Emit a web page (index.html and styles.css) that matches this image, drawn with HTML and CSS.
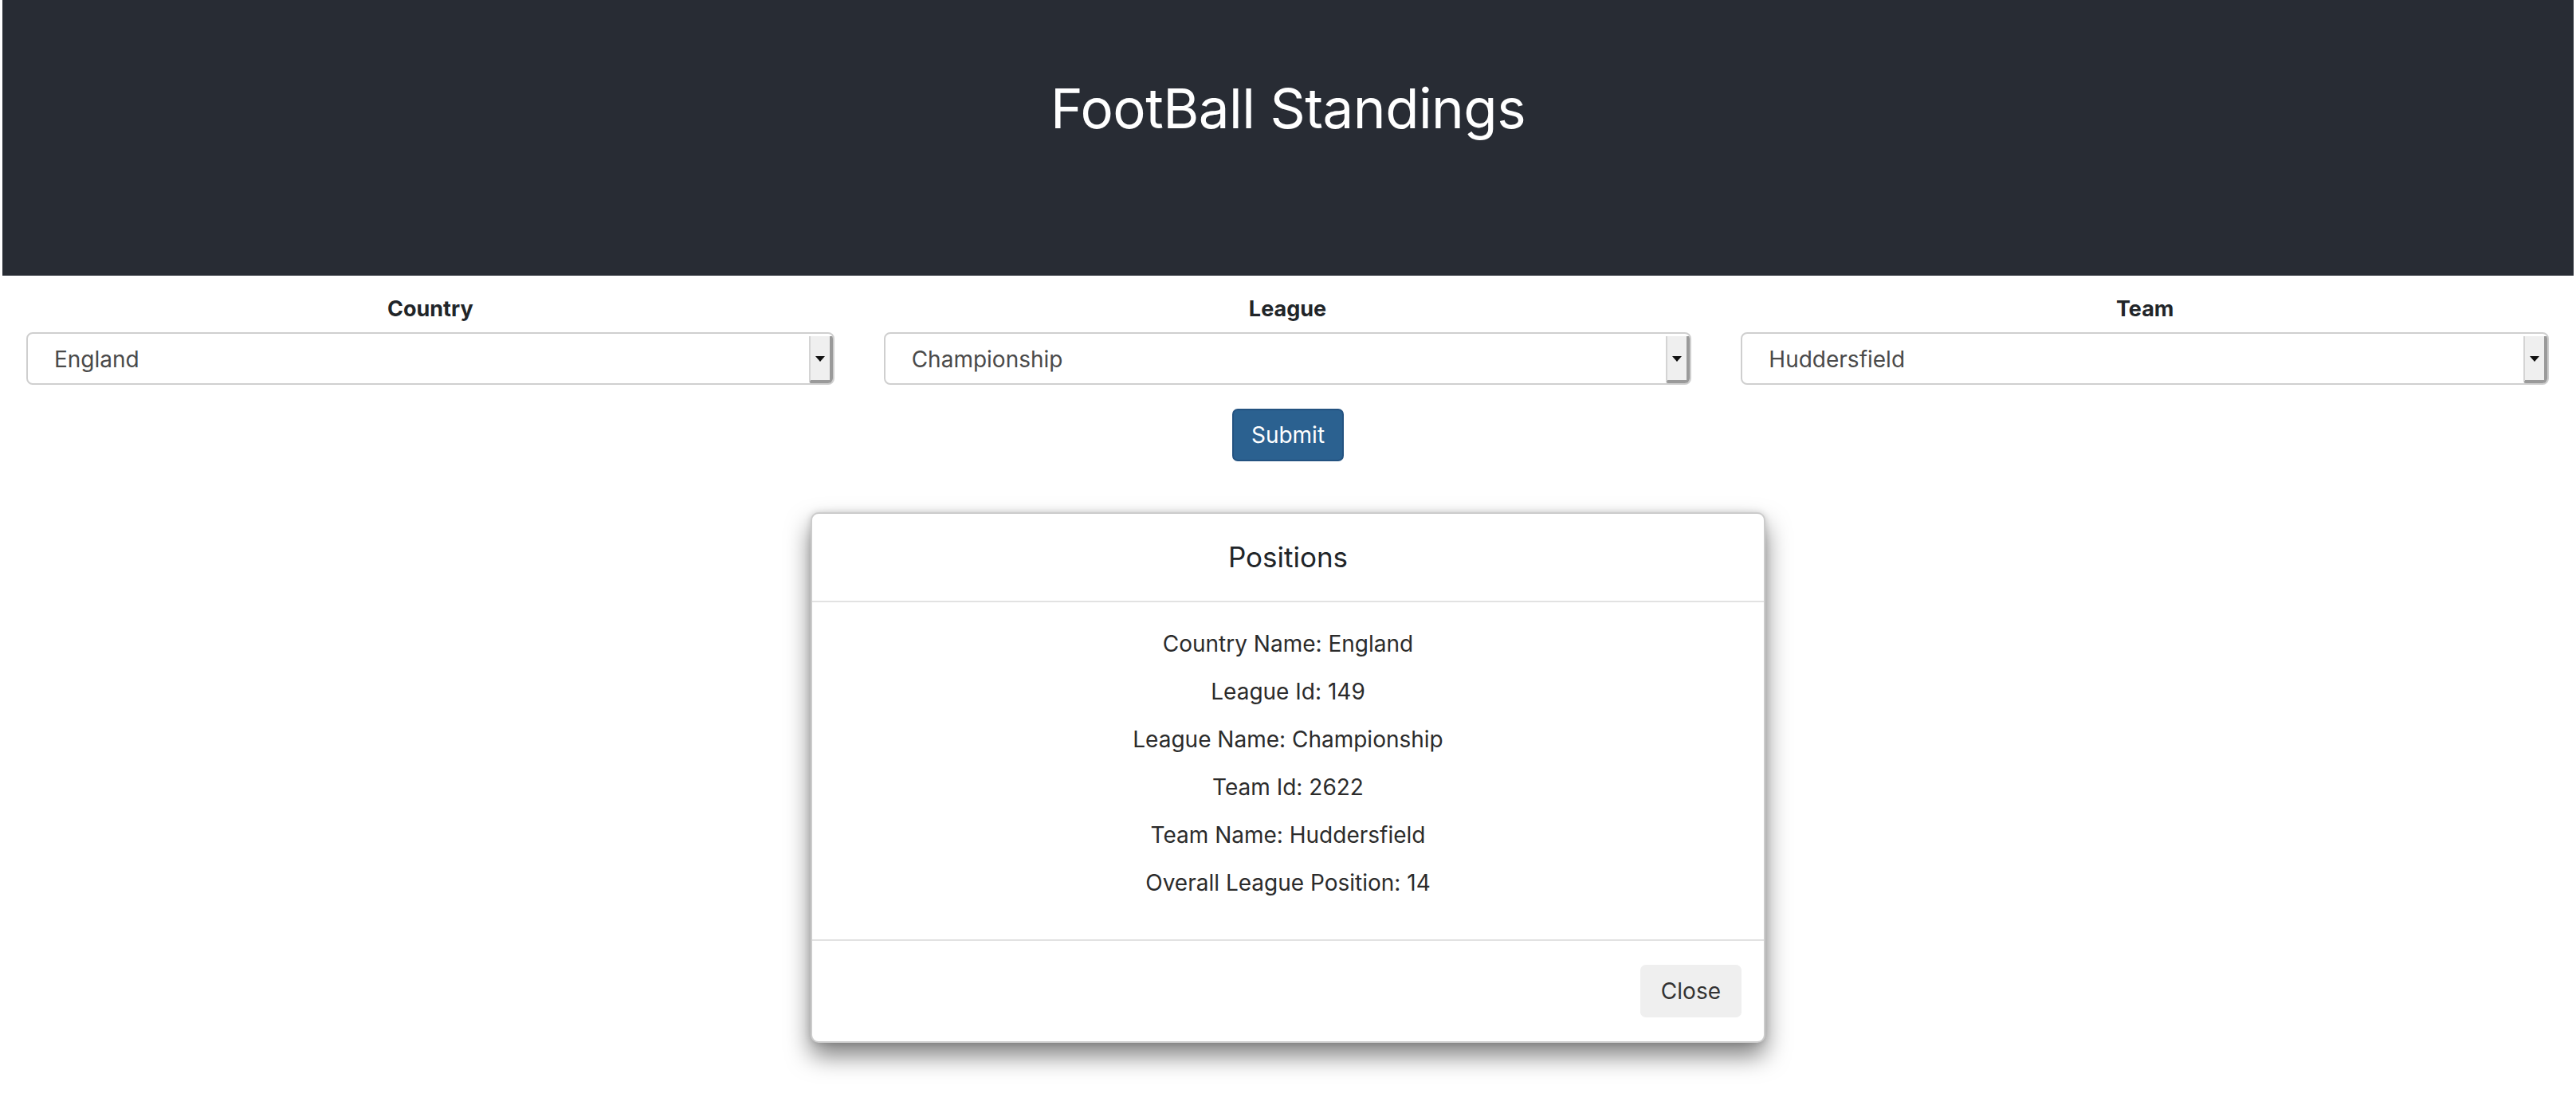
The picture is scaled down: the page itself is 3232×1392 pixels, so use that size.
FILE: index.html
```html
<!DOCTYPE html>
<html lang="en">
<head>
<meta charset="utf-8">
<title>FootBall Standings</title>
<link rel="stylesheet" href="styles.css">
</head>
<body>
<header class="app-header">
  <h1 class="app-title">FootBall Standings</h1>
</header>

<section class="filters">
  <div class="field">
    <label class="field-label">Country</label>
    <div class="select">
      <span class="select-value">England</span>
      <span class="select-button"><span class="select-arrow"></span></span>
    </div>
  </div>
  <div class="field">
    <label class="field-label">League</label>
    <div class="select">
      <span class="select-value">Championship</span>
      <span class="select-button"><span class="select-arrow"></span></span>
    </div>
  </div>
  <div class="field">
    <label class="field-label">Team</label>
    <div class="select">
      <span class="select-value">Huddersfield</span>
      <span class="select-button"><span class="select-arrow"></span></span>
    </div>
  </div>
</section>

<div class="actions">
  <button class="btn btn-primary" type="button">Submit</button>
</div>

<div class="modal">
  <div class="modal-header">
    <h5 class="modal-title">Positions</h5>
  </div>
  <div class="modal-body">
    <p class="info-line">Country Name: England</p>
    <p class="info-line">League Id: 149</p>
    <p class="info-line">League Name: Championship</p>
    <p class="info-line">Team Id: 2622</p>
    <p class="info-line">Team Name: Huddersfield</p>
    <p class="info-line">Overall League Position: 14</p>
  </div>
  <div class="modal-footer">
    <button class="btn btn-light" type="button">Close</button>
  </div>
</div>
</body>
</html>
```

FILE: styles.css
```css
* {
  box-sizing: border-box;
}

html, body {
  margin: 0;
  padding: 0;
  background: #ffffff;
}

body {
  font-family: Inter, "Liberation Sans", sans-serif;
  font-size: 28px;
  line-height: 42px;
  color: #212529;
  min-height: 1392px;
}

.app-header {
  margin: 0 3px;
  height: 346px;
  background: #282c34;
  padding-top: 94px;
  text-align: center;
}

.app-title {
  margin: 0;
  font-size: 69px;
  line-height: 84px;
  font-weight: 400;
  color: #ffffff;
  letter-spacing: -0.5px;
}

.filters {
  display: grid;
  grid-template-columns: 1fr 1fr 1fr;
  column-gap: 62px;
  padding: 21px 34px 0 33px;
}

.field {
  display: flex;
  flex-direction: column;
}

.field-label {
  display: block;
  text-align: center;
  font-weight: 700;
  font-size: 27px;
  line-height: 42px;
  margin-bottom: 8px;
  color: #212529;
}

.select {
  display: flex;
  align-items: stretch;
  height: 66px;
  border: 2px solid #cfcfcf;
  border-radius: 8px;
  background: #ffffff;
  overflow: hidden;
}

.select-value {
  flex: 1;
  display: flex;
  align-items: center;
  padding-left: 33px;
  padding-top: 2px;
  color: #4a4a4a;
  font-size: 28px;
}

.select-button {
  width: 30px;
  margin-top: 3px;
  background: #efefef;
  border-left: 2px solid #d4d4d4;
  border-right: 4px solid #9a9a9a;
  border-bottom: 4px solid #9a9a9a;
  border-bottom-left-radius: 3px;
  display: flex;
  align-items: center;
  justify-content: center;
}

.select-arrow {
  width: 0;
  height: 0;
  border-left: 6px solid transparent;
  border-right: 6px solid transparent;
  border-top: 7px solid #111111;
  margin-top: 1px;
}

.actions {
  display: flex;
  justify-content: center;
  margin-top: 30px;
}

.btn {
  font-family: inherit;
  font-size: 28px;
  line-height: 42px;
  padding: 10px 22px;
  border-radius: 7px;
  cursor: pointer;
}

.btn-primary {
  background: #2b6190;
  border: 2px solid #235280;
  color: #ffffff;
}

.btn-light {
  background: #efefef;
  border: 2px solid #efefef;
  color: #333333;
  padding: 10px 24px;
}

.modal {
  width: 1198px;
  margin: 64px auto 0;
  background: #ffffff;
  border: 2px solid rgba(0, 0, 0, 0.2);
  border-radius: 10px;
  box-shadow: 0 16px 30px rgba(0, 0, 0, 0.5), 0 0 8px rgba(0, 0, 0, 0.15);
}

.modal-header {
  padding: 28px;
  border-bottom: 2px solid #e2e2e2;
  text-align: center;
}

.modal-title {
  margin: 0;
  font-size: 35px;
  line-height: 53px;
  font-weight: 400;
  color: #212529;
}

.modal-body {
  padding: 31px 28px 32px;
  text-align: center;
}

.info-line {
  margin: 0 0 18px;
  color: #2b2b2b;
}

.modal-footer {
  display: flex;
  justify-content: flex-end;
  padding: 30px 28px 30px;
  border-top: 2px solid #e2e2e2;
}
```
